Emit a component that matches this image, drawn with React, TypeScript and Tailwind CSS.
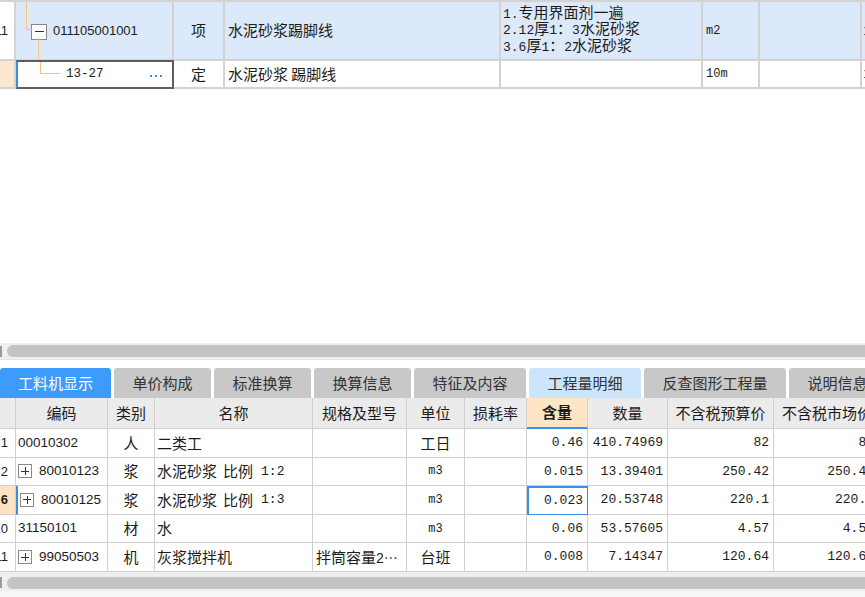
import React from "react";

const cjk = "font-['Noto_Sans_CJK_SC',sans-serif]";
const mono = "font-['Liberation_Mono','Noto_Sans_CJK_SC',monospace]";
const sans = "font-['Liberation_Sans','Noto_Sans_CJK_SC',sans-serif]";

const tabs = [
  { label: "工料机显示", w: "w-[111px]", cls: "bg-[#3d9bfd] text-white" },
  { label: "单价构成", w: "w-[97px]", cls: "bg-[#c8c8c8] text-[#333]" },
  { label: "标准换算", w: "w-[97px]", cls: "bg-[#c8c8c8] text-[#333]" },
  { label: "换算信息", w: "w-[97px]", cls: "bg-[#c8c8c8] text-[#333]" },
  { label: "特征及内容", w: "w-[112px]", cls: "bg-[#c8c8c8] text-[#333]" },
  { label: "工程量明细", w: "w-[112px]", cls: "bg-[#cde5fb] text-[#333]" },
  { label: "反查图形工程量", w: "w-[142px]", cls: "bg-[#c8c8c8] text-[#333]" },
  { label: "说明信息", w: "w-[97px]", cls: "bg-[#c8c8c8] text-[#333]" },
];

const rows = [
  { no: "1", code: "00010302", tree: false, type: "人", name: "二类工", spec: "", unit: "工日", unitMono: false, qty: "0.46", amount: "410.74969", p1: "82", p2: "82" },
  { no: "2", code: "80010123", tree: true, type: "浆", name: "水泥砂浆 比例 1:2", spec: "", unit: "m3", unitMono: true, qty: "0.015", amount: "13.39401", p1: "250.42", p2: "250.42" },
  { no: "6", code: "80010125", tree: true, type: "浆", name: "水泥砂浆 比例 1:3", spec: "", unit: "m3", unitMono: true, qty: "0.023", amount: "20.53748", p1: "220.1", p2: "220.1", active: true },
  { no: "10", code: "31150101", tree: false, type: "材", name: "水", spec: "", unit: "m3", unitMono: true, qty: "0.06", amount: "53.57605", p1: "4.57", p2: "4.57" },
  { no: "11", code: "99050503", tree: true, type: "机", name: "灰浆搅拌机", spec: "拌筒容量2…", unit: "台班", unitMono: false, qty: "0.008", amount: "7.14347", p1: "120.64", p2: "120.64" },
];

function ScrollBar() {
  return (
    <div className="flex items-center h-[16px] bg-[#efefef] shrink-0">
      <div className="w-[2px] h-[11px] bg-[#9a9a9a]" />
      <div className="ml-[5px] h-[12px] flex-1 rounded-l-full bg-[#c4c4c4]" />
    </div>
  );
}

function PlusBox() {
  return (
    <div className="w-[14px] h-[14px] border border-[#8a8a8a] bg-white flex items-center justify-center shrink-0">
      <div className="relative w-[8px] h-[8px]">
        <div className="absolute left-0 top-[3.5px] w-[8px] h-[1px] bg-[#333]" />
        <div className="absolute top-0 left-[3.5px] w-[1px] h-[8px] bg-[#333]" />
      </div>
    </div>
  );
}

function TopGrid() {
  const cell = "border-r-2 border-b-2 border-[#d3d3d3] flex items-center overflow-hidden whitespace-nowrap";
  return (
    <div className="h-[343px] shrink-0 overflow-hidden bg-white">
      <div className="grid grid-cols-[16px_158px_51px_276px_202px_57px_102px_100px] border-t-2 border-[#d3d3d3] text-[15px] text-[#1c1c1c]">
        {/* row 1 */}
        <div className={`${cell} h-[59px] justify-end pr-[6px] bg-white ${sans} text-[13px]`}>11</div>
        <div className={`${cell} h-[59px] bg-[#dce9fb] relative`}>
          <div className="absolute left-[10px] top-[-2px] w-[1px] h-[30px] bg-[#f6c47f]" />
          <div className="absolute left-[10px] top-[27px] w-[6px] h-[1px] bg-[#f6c47f]" />
          <div className="absolute left-[22px] top-[36px] w-[1px] h-[25px] bg-[#f6c47f]" />
          <div className="ml-[15px] w-[16px] h-[16px] border border-[#8a8a8a] bg-white flex items-center justify-center mt-[2px]">
            <div className="w-[9px] h-[1px] bg-[#333]" />
          </div>
          <span className={`ml-[6px] ${sans} text-[13px]`}>011105001001</span>
        </div>
        <div className={`${cell} h-[59px] bg-[#dce9fb] justify-center`}>项</div>
        <div className={`${cell} h-[59px] bg-[#dce9fb] pl-[3px]`}>水泥砂浆踢脚线</div>
        <div className={`${cell} h-[59px] bg-[#dce9fb] pl-[2px] pt-[2px]`}>
          <div className={`${mono} text-[13px] leading-[16.5px]`}>
            <div>1.<span className="text-[15px]">专用界面剂一遍</span></div>
            <div>2.12<span className="text-[15px]">厚</span>1<span className="text-[15px]">：</span>3<span className="text-[15px]">水泥砂浆</span></div>
            <div>3.6<span className="text-[15px]">厚</span>1<span className="text-[15px]">：</span>2<span className="text-[15px]">水泥砂浆</span></div>
          </div>
        </div>
        <div className={`${cell} h-[59px] bg-[#dce9fb] pl-[3px] ${mono} text-[12px]`}>m2</div>
        <div className={`${cell} h-[59px] bg-[#dce9fb]`} />
        <div className={`${cell} h-[59px] bg-[#dce9fb] pl-[1px] ${sans} text-[12px] text-[#555]`}>1</div>

        {/* row 2 */}
        <div className={`${cell} h-[28px] bg-[#fde8cf]`} />
        <div className="h-[29px] -mt-[1px] border-2 border-[#5e5e5e] border-l-[#3a8ee6] bg-white flex items-center relative overflow-hidden">
          <div className="absolute left-[22px] top-[-2px] w-[1px] h-[14px] bg-[#f6c47f]" />
          <div className="absolute left-[22px] top-[11px] w-[20px] h-[1px] bg-[#f6c47f]" />
          <span className={`ml-[48px] ${mono} text-[12.5px]`}>13-27</span>
          <div className="ml-auto mr-[10px] flex gap-[3px] mt-[2px]">
            <div className="w-[2px] h-[2px] bg-[#3a8ee6]" />
            <div className="w-[2px] h-[2px] bg-[#3a8ee6]" />
            <div className="w-[2px] h-[2px] bg-[#3a8ee6]" />
          </div>
        </div>
        <div className={`${cell} h-[28px] justify-center`}>定</div>
        <div className={`${cell} h-[28px] pl-[3px]`}>水泥砂浆 踢脚线</div>
        <div className={`${cell} h-[28px]`} />
        <div className={`${cell} h-[28px] pl-[3px] ${mono} text-[12px]`}>10m</div>
        <div className={`${cell} h-[28px]`} />
        <div className={`${cell} h-[28px] pl-[1px] ${sans} text-[12px] text-[#555]`}>1</div>
      </div>
    </div>
  );
}

function Tabs() {
  return (
    <div className="flex gap-[3px] h-[30px] shrink-0 overflow-hidden bg-white">
      {tabs.map((t) => (
        <div
          key={t.label}
          className={`${t.w} shrink-0 rounded-t-[3px] flex items-center justify-center text-[15px] ${t.cls}`}
        >
          {t.label}
        </div>
      ))}
    </div>
  );
}

function BottomTable() {
  const cols = "grid grid-cols-[16px_92px_47px_158px_94px_58px_62px_61px_80px_106px_106px]";
  const hc = "border-r border-b border-[#d0d0d0] bg-[#ebebeb] flex items-center justify-center whitespace-nowrap overflow-hidden h-[31px]";
  const dc = "border-r border-b border-[#d0d0d0] flex items-center whitespace-nowrap overflow-hidden h-[28.6px]";
  return (
    <div className="shrink-0 overflow-hidden text-[15px] text-[#1c1c1c]">
      <div className={cols}>
        <div className={hc} />
        <div className={hc}>编码</div>
        <div className={hc}>类别</div>
        <div className={hc}>名称</div>
        <div className={hc}>规格及型号</div>
        <div className={hc}>单位</div>
        <div className={hc}>损耗率</div>
        <div className={`${hc} !bg-[#fde5c6] font-bold border-b-2 !border-b-[#3a8ee6]`}>含量</div>
        <div className={hc}>数量</div>
        <div className={hc}>不含税预算价</div>
        <div className={`${hc} justify-start pl-[8px]`}>不含税市场价</div>
      </div>
      {rows.map((r) => (
        <div key={r.no} className={cols}>
          <div
            className={`${dc} justify-end pr-[7px] ${sans} text-[13px] ${r.active ? "bg-[#fde3c3] font-bold" : "bg-white"}`}
          >
            {r.no}
          </div>
          <div className={`${dc} pl-[2px] gap-[7px] ${sans} text-[13.5px] ${r.active ? "border-l-2 border-l-[#3a8ee6] pl-0" : ""}`}>
            {r.tree && <PlusBox />}
            <span>{r.code}</span>
          </div>
          <div className={`${dc} justify-center`}>{r.type}</div>
          <div className={`${dc} pl-[2px]`}>
            {r.name.split(" ").map((part, i) =>
              /^[0-9:]+$/.test(part) ? (
                <span key={i} className={`${mono} text-[13px] ml-[8px]`}>{part}</span>
              ) : (
                <span key={i} className={i > 0 ? "ml-[6px]" : ""}>{part}</span>
              )
            )}
          </div>
          <div className={`${dc} pl-[3px]`}>
            {r.spec && (
              <span>
                拌筒容量<span className={`${sans} text-[14px]`}>2⋯</span>
              </span>
            )}
          </div>
          <div className={`${dc} justify-center ${r.unitMono ? `${mono} text-[12px]` : ""}`}>{r.unit}</div>
          <div className={dc} />
          <div
            className={`${dc} justify-end pr-[4px] ${mono} text-[13px] ${r.active ? "border-2 !border-[#3a8ee6] pr-[3px]" : ""}`}
          >
            {r.qty}
          </div>
          <div className={`${dc} justify-end pr-[4px] ${mono} text-[13px]`}>{r.amount}</div>
          <div className={`${dc} justify-end pr-[4px] ${mono} text-[13px]`}>{r.p1}</div>
          <div className={`${dc} justify-end pr-[5px] ${mono} text-[13px]`}>{r.p2}</div>
        </div>
      ))}
    </div>
  );
}

export default function App() {
  return (
    <div className={`w-[865px] h-[597px] overflow-hidden bg-white flex flex-col ${cjk}`}>
      <TopGrid />
      <ScrollBar />
      <div className="h-[9px] shrink-0 bg-white border-t border-[#e4e4e4]" />
      <Tabs />
      <BottomTable />
      <div className="h-[3px] shrink-0 bg-[#efefef]" />
      <ScrollBar />
      <div className="flex-1 bg-[#f7f7f7]" />
    </div>
  );
}
